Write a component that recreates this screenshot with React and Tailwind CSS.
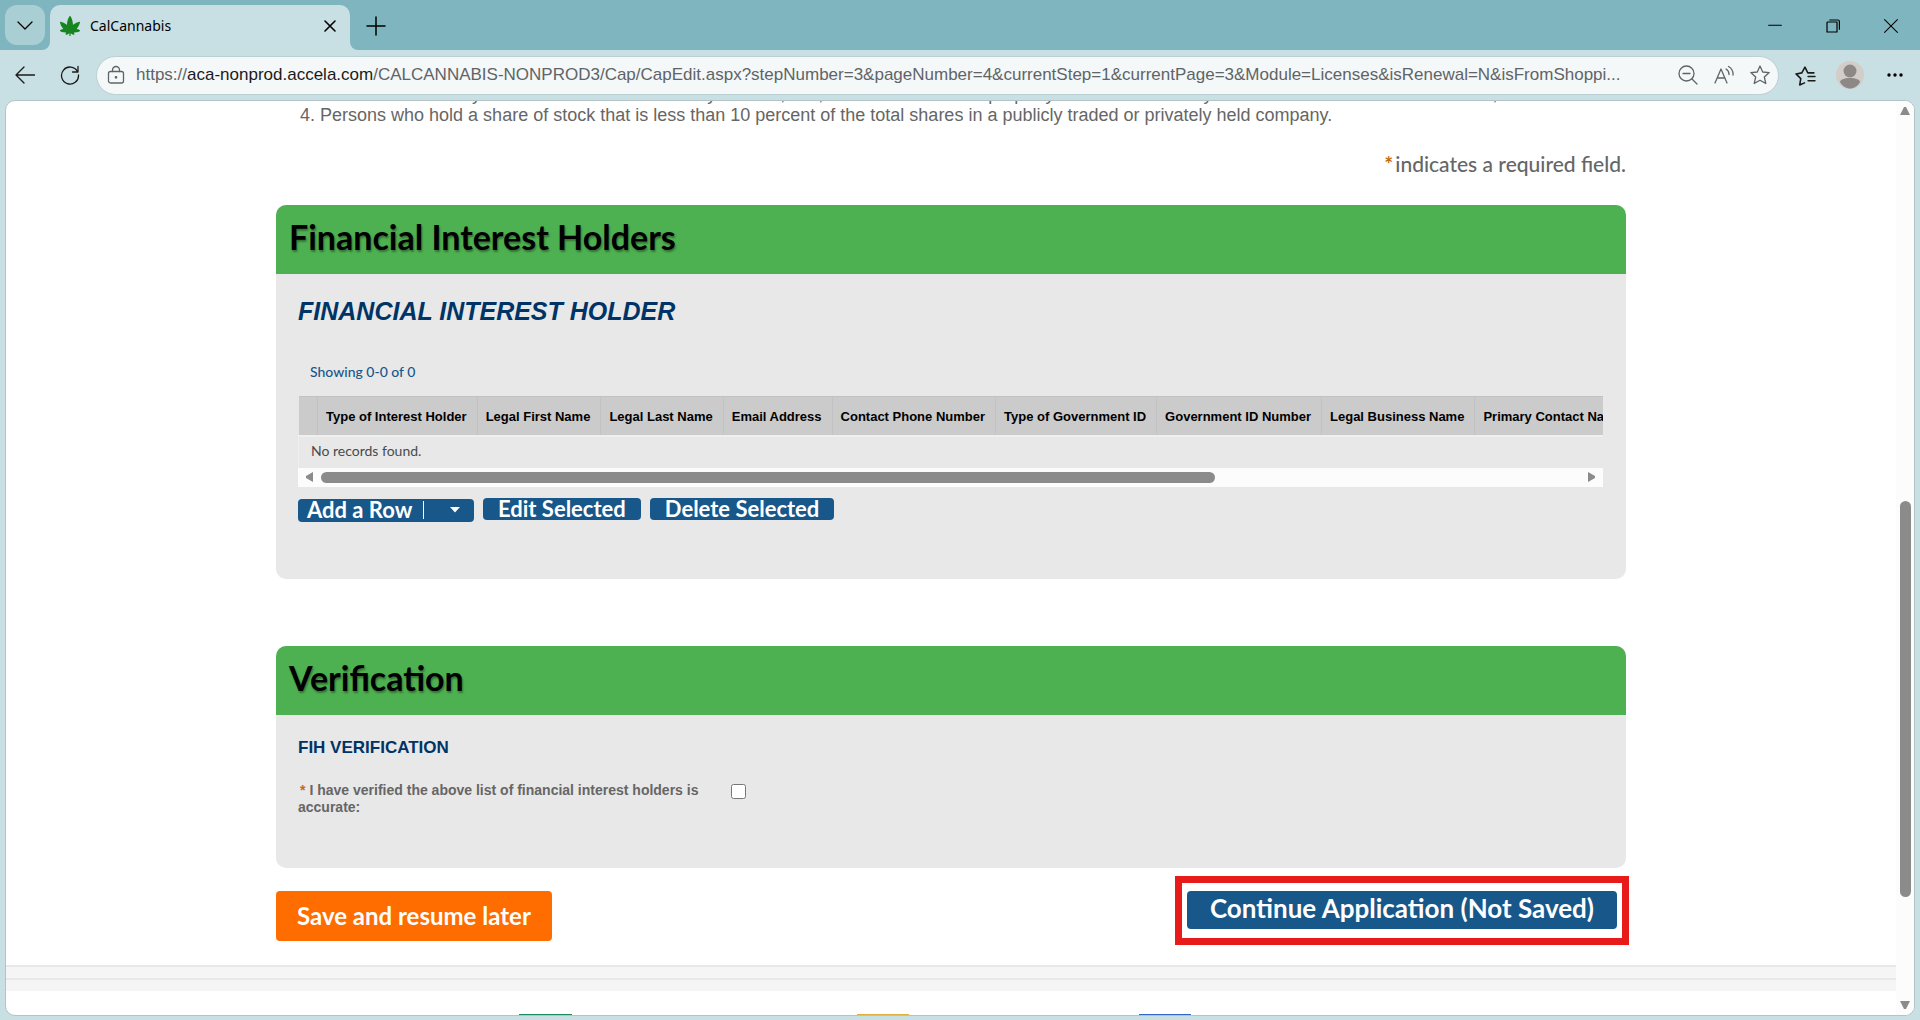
import React, { useState } from 'react';
import { FaCannabis } from 'react-icons/fa';

const columns = [
    'Type of Interest Holder',
    'Legal First Name',
    'Legal Last Name',
    'Email Address',
    'Contact Phone Number',
    'Type of Government ID',
    'Government ID Number',
    'Legal Business Name',
    'Primary Contact Name',
];

const Icon = ({ size = 20, width = 1.3, className, children }) => (
    <svg width={size} height={size} viewBox="0 0 20 20" fill="none" stroke="currentColor" strokeWidth={width} strokeLinecap="round" strokeLinejoin="round" className={className} aria-hidden="true">
        {children}
    </svg>
);

const TitleBar = () => (
    <div className="flex h-[50px] shrink-0 items-end bg-[#7eb5be]">
        <button aria-label="Tab actions" className="mb-[5px] ml-[5px] flex h-10 w-10 items-center justify-center rounded-xl bg-[#a9cfd5] text-black">
            <Icon><path d="M3 7l7 7 7-7" /></Icon>
        </button>
        <div className="relative ml-[5px] flex h-[45px] w-[300px] items-center rounded-t-[10px] bg-[#c8dfe3] pr-2.5 pl-2.5 pb-1">
            <svg className="absolute bottom-0 -left-2" width="8" height="8" aria-hidden="true"><path d="M8 0v8H0a8 8 0 0 0 8-8z" fill="#c8dfe3" /></svg>
            <svg className="absolute bottom-0 -right-2" width="8" height="8" aria-hidden="true"><path d="M0 0v8h8a8 8 0 0 1-8-8z" fill="#c8dfe3" /></svg>
            <FaCannabis className="text-[#16851f]" size={20} />
            <span className="ml-2.5 text-sm text-black">CalCannabis</span>
            <button aria-label="Close tab" className="ml-auto flex h-5 w-5 items-center justify-center text-black">
                <Icon width={1.6}><path d="M5 5l10 10M15 5L5 15" /></Icon>
            </button>
        </div>
        <button aria-label="New tab" className="mb-3.5 ml-4 text-black">
            <Icon width={1.5}><path d="M10 1v18M1 10h18" /></Icon>
        </button>
        <div className="mb-4 ml-auto flex items-center gap-[42px] pr-[21px] text-black">
            <button aria-label="Minimize"><Icon size={16}><path d="M2 9h16" /></Icon></button>
            <button aria-label="Restore"><Icon size={16} width={1.5}><path d="M3.500 5h11.500v12.500h-12.500V6a1 1 0 0 1 1-1zM6 2.500h10a2 2 0 0 1 2 2V14" /></Icon></button>
            <button aria-label="Close window"><Icon size={16}><path d="M2 2l16 16M18 2L2 18" /></Icon></button>
        </div>
    </div>
);

const Toolbar = () => (
    <div className="flex h-[50px] shrink-0 items-center bg-[#c8dfe3] pr-4 pl-[15px] text-[#1b1b1b]">
        <button aria-label="Back"><Icon><path d="M19.500 10H1M9 2L1 10l8 8" /></Icon></button>
        <button aria-label="Refresh" className="ml-[25px]">
            <Icon><path d="M17.500 6.500A8.500 8.500 0 1 0 18.500 10M18 1.500v5.500h-5.500" /></Icon>
        </button>
        <div className="ml-4 flex h-[39px] min-w-0 flex-1 items-center rounded-full border border-[#bccfd2] bg-[#f4f8f9] pr-2 pl-[9px] text-[#606466]">
            <button aria-label="View site information" className="shrink-0">
                <Icon><rect x="2.500" y="6.500" width="15" height="11.500" rx="2" /><path d="M6.500 6.500V5a3.500 3.500 0 0 1 7 0v1.500" /><circle cx="10" cy="12.300" r="0.700" fill="currentColor" /></Icon>
            </button>
            <div role="textbox" aria-label="Address" contentEditable suppressContentEditableWarning className="ml-2.5 min-w-0 flex-1 overflow-hidden font-['Liberation_Sans',sans-serif] text-[17px] whitespace-nowrap">
                https://<span className="text-[#1b1b1b]">aca-nonprod.accela.com</span>/CALCANNABIS-NONPROD3/Cap/CapEdit.aspx?stepNumber=3&pageNumber=4&currentStep=1&currentPage=3&Module=Licenses&isRenewal=N&isFromShoppi...
            </div>
            <div className="flex shrink-0 items-center gap-4">
                <button aria-label="Zoom out"><Icon><circle cx="8.500" cy="8.500" r="7.500" /><path d="M14 14l5 5M5 8.500h7" /></Icon></button>
                <button aria-label="Read aloud"><Icon><path d="M1 18L7 4l6 14M3.500 13h7M12 4a6 6 0 0 1 3 5.500M14.500 1.500a9 9 0 0 1 4.500 8.500" /></Icon></button>
                <button aria-label="Add to favorites"><Icon><path d="M10 1l2.700 6 6.500.600-4.900 4.400 1.500 6.500L10 15.200l-5.800 3.300 1.500-6.500L.8 7.600l6.500-.6z" /></Icon></button>
            </div>
        </div>
        <div className="ml-4 flex items-center">
            <button aria-label="Favorites"><Icon width={1.500} size={21}><path d="M9 17l-4.500 2 1-6L1 8.500l5.500-1L9.500 2l2.700 5.500H18M12.500 11H19M12.500 15H19" /></Icon></button>
            <button aria-label="Profile" className="ml-5">
                <svg width="28" height="28" viewBox="0 0 28 28" aria-hidden="true">
                    <circle cx="14" cy="14" r="14" fill="#d3cdc9" />
                    <circle cx="14" cy="10" r="6.500" fill="#8b8886" />
                    <path d="M4 21c0-2 4-4 10-4s10 2 10 4c-2 4-6 6.500-10 6.500S6 25 4 21z" fill="#8b8886" />
                </svg>
            </button>
            <button aria-label="Settings and more" className="ml-[22px]">
                <svg width="18" height="20" viewBox="0 0 18 20" aria-hidden="true">
                    <circle cx="3" cy="10" r="1.700" /><circle cx="9" cy="10" r="1.700" /><circle cx="15" cy="10" r="1.700" />
                </svg>
            </button>
        </div>
    </div>
);

const Section = ({ title, children }) => (
    <section className="rounded-[10px] bg-[#e8e8e8]">
        <h2 className="flex h-[69px] items-center rounded-t-[10px] bg-[#4eb151] px-[13px] pb-1.5 font-[Lato] text-[34px] font-bold text-black [text-shadow:1px_2px_2px_rgba(0,0,0,0.35)]">
            {title}
        </h2>
        {children}
    </section>
);

const App = () => {
    const [verified, setVerified] = useState(false);

    return (
        <div className="flex h-screen flex-col bg-[#c8dfe3] font-['Noto_Sans',sans-serif]">
            <TitleBar />
            <Toolbar />
            <div className="mx-[5px] mb-[4px] flex min-h-0 flex-1 overflow-hidden rounded-[10px] border border-[#b3c4c6] bg-white">
                <main className="min-w-0 flex-1 overflow-hidden font-['Liberation_Sans',sans-serif] text-[#666]">
                    <div className="mx-auto -mt-[17px] max-w-[1350px]">
                        <ol className="list-inside list-decimal pl-6 text-lg leading-[21px]" start={3}>
                            <li>Persons whose only financial interest is a security interest, lien, or encumbrance on property that will be used by the commercial cannabis business, and</li>
                            <li>Persons who hold a share of stock that is less than 10 percent of the total shares in a publicly traded or privately held company.</li>
                        </ol>
                        <p className="mt-[26px] text-right font-[Lato] text-[21px] leading-6 font-medium">
                            <span className="mr-0.5 font-bold text-[#c46a11]">*</span>indicates a required field.
                        </p>

                        <div className="mt-[29px]">
                            <Section title="Financial Interest Holders">
                                <div className="pt-[23px] pr-[23px] pb-[57px] pl-[22px]">
                                    <h3 className="text-[25px] leading-7 font-bold text-[#003366] italic">FINANCIAL INTEREST HOLDER</h3>
                                    <p className="mt-[35px] pl-3 font-[Lato] text-sm leading-6 font-medium text-[#17578a]">Showing 0-0 of 0</p>
                                    <div className="mt-3 overflow-hidden">
                                        <table className="w-max border-collapse text-left">
                                            <thead>
                                                <tr className="h-[39px] bg-[#cbcbcb] text-[13px] text-black">
                                                    <td className="w-[19px] border-t border-r border-[#c2c2c2]"></td>
                                                    {columns.map((name) => (
                                                        <th key={name} className="border-t border-r border-[#c2c2c2] pt-0.5 pr-[10px] pl-2 font-bold whitespace-nowrap">{name}</th>
                                                    ))}
                                                </tr>
                                            </thead>
                                            <tbody>
                                                <tr className="h-8 border-t-2 border-l border-[#efefef]">
                                                    <td colSpan={columns.length + 1} className="pb-0.5 pl-3 font-[Lato] text-sm text-[#4a4a4a]">No records found.</td>
                                                </tr>
                                            </tbody>
                                        </table>
                                    </div>
                                    <div className="flex h-[19px] items-center bg-[#fcfcfc] px-2 text-[#8b8b8b]">
                                        <svg width="7" height="10" aria-hidden="true"><path d="M7 0v10L0 6V4z" fill="currentColor" /></svg>
                                        <div className="mx-2 flex-1">
                                            <div className="h-[11px] w-[71%] rounded-full bg-[#8b8b8b]"></div>
                                        </div>
                                        <svg width="7" height="10" aria-hidden="true"><path d="M0 0v10l7-4V4z" fill="currentColor" /></svg>
                                    </div>
                                    <div className="mt-[11px] flex items-start gap-[9px] font-[Lato] text-[22px] leading-5 font-bold text-white">
                                        <button className="mt-px flex h-[23px] w-[176px] items-center rounded-[4px] bg-[#17578a] pl-[9px]">
                                            Add a Row
                                            <span className="ml-[11px] h-[18px] w-px bg-white"></span>
                                            <svg className="ml-[26px]" width="10" height="6" aria-hidden="true"><path d="M0 0h10L5 5.500z" fill="#fff" /></svg>
                                        </button>
                                        <button className="h-[22px] rounded-[4px] bg-[#17578a] px-[15px]">Edit Selected</button>
                                        <button className="h-[22px] rounded-[4px] bg-[#17578a] px-[15px]">Delete Selected</button>
                                    </div>
                                </div>
                            </Section>
                        </div>

                        <div className="mt-[67px]">
                            <Section title="Verification">
                                <div className="pt-[23px] pr-[23px] pb-[52px] pl-[22px]">
                                    <h3 className="text-[17px] leading-5 font-bold text-[#003366]">FIH VERIFICATION</h3>
                                    <div className="mt-6 flex items-start text-sm leading-[17px] font-bold">
                                        <label htmlFor="verified" className="w-[410px]">
                                            <span className="mr-1 ml-0.5 text-[#c46a11]">*</span>I have verified the above list of financial interest holders is accurate:
                                        </label>
                                        <input
                                            id="verified"
                                            type="checkbox"
                                            className="mt-0.5 ml-[23px] h-[15px] w-[15px]"
                                            checked={verified}
                                            onChange={(e) => setVerified(e.target.checked)}
                                        />
                                    </div>
                                </div>
                            </Section>
                        </div>

                        <div className="mt-2 flex items-start justify-between font-[Lato] font-bold text-white">
                            <button className="mt-[15px] h-[50px] rounded-[4px] bg-[#ff6c00] px-[21px] text-2xl">Save and resume later</button>
                            <div className="-mr-[3px] border-[7px] border-[#e81b1b] px-[5px] pt-2 pb-[9px]">
                                <button className="block h-[38px] rounded-[4px] bg-[#17578a] px-[23px] pb-1 text-[26px] leading-8">Continue Application (Not Saved)</button>
                            </div>
                        </div>
                    </div>

                    <footer className="mt-5">
                        <div className="h-[13px] border-t-2 border-[#e8e8e8] bg-[#f5f5f5]"></div>
                        <div className="h-[13px] border-t-2 border-[#e8e8e8] bg-[#f5f5f5]"></div>
                        <div className="mt-[23px] flex pl-[513px]">
                            <div className="h-10 w-[53px] bg-[#1f8a5c]"></div>
                            <div className="ml-[285px] h-10 w-[52px] bg-[#e0b03c]"></div>
                            <div className="ml-[230px] h-10 w-[52px] bg-[#3567c5]"></div>
                        </div>
                    </footer>
                </main>
                <div className="flex w-[18px] shrink-0 flex-col items-center bg-[#fcfcfc] py-1.5 text-[#8b8b8b]">
                    <svg width="10" height="8" aria-hidden="true"><path d="M0 8h10L6 0H4z" fill="currentColor" /></svg>
                    <div className="flex w-[11px] flex-1 flex-col">
                        <div className="flex-[385]"></div>
                        <div className="flex-[395] rounded-full bg-[#8b8b8b]"></div>
                        <div className="flex-[104]"></div>
                    </div>
                    <svg width="10" height="8" aria-hidden="true"><path d="M0 0h10L6 8H4z" fill="currentColor" /></svg>
                </div>
            </div>
        </div>
    );
};

export default App;
